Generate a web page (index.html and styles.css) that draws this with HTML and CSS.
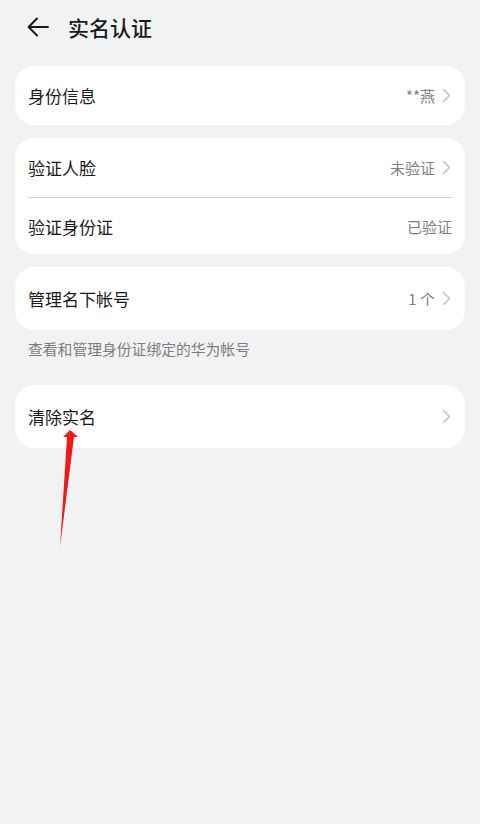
FILE: index.html
```html
<!DOCTYPE html>
<html lang="zh">
<head>
<meta charset="utf-8">
<link rel="stylesheet" href="styles.css">
</head>
<body>
<div class="page">
  <header class="topbar">
    <svg class="back" width="22" height="20" viewBox="0 0 22 20"><path d="M21 10H2M10 1.5L1.6 10l8.4 8.5" fill="none" stroke="#1a1a1a" stroke-width="2" stroke-linecap="round" stroke-linejoin="round"/></svg>
    <h1 class="title">实名认证</h1>
  </header>

  <section class="card">
    <div class="row">
      <span class="label">身份信息</span>
      <span class="value">**燕</span>
      <svg class="chev" width="9" height="15" viewBox="0 0 9 15"><path d="M1.5 1.5L7.5 7.5L1.5 13.5" fill="none" stroke="#c4c4c4" stroke-width="1.6" stroke-linecap="round" stroke-linejoin="round"/></svg>
    </div>
  </section>

  <section class="card">
    <div class="row">
      <span class="label">验证人脸</span>
      <span class="value">未验证</span>
      <svg class="chev" width="9" height="15" viewBox="0 0 9 15"><path d="M1.5 1.5L7.5 7.5L1.5 13.5" fill="none" stroke="#c4c4c4" stroke-width="1.6" stroke-linecap="round" stroke-linejoin="round"/></svg>
    </div>
    <div class="divider"></div>
    <div class="row row-short">
      <span class="label">验证身份证</span>
      <span class="value">已验证</span>
    </div>
  </section>

  <section class="card card-tall">
    <div class="row">
      <span class="label">管理名下帐号</span>
      <span class="value">1 个</span>
      <svg class="chev" width="9" height="15" viewBox="0 0 9 15"><path d="M1.5 1.5L7.5 7.5L1.5 13.5" fill="none" stroke="#c4c4c4" stroke-width="1.6" stroke-linecap="round" stroke-linejoin="round"/></svg>
    </div>
  </section>
  <p class="caption">查看和管理身份证绑定的华为帐号</p>

  <section class="card card-tall card-last">
    <div class="row">
      <span class="label">清除实名</span>
      <span class="value"></span>
      <svg class="chev" width="9" height="15" viewBox="0 0 9 15"><path d="M1.5 1.5L7.5 7.5L1.5 13.5" fill="none" stroke="#c4c4c4" stroke-width="1.6" stroke-linecap="round" stroke-linejoin="round"/></svg>
    </div>
  </section>

  <svg class="annot" width="30" height="125" viewBox="0 0 30 125"><polygon points="15,0 23,7 19,7 5,117 12,7 8,7" fill="#f01818"/></svg>
</div>
</body>
</html>
```

FILE: styles.css
```css
* { box-sizing: border-box; }
html, body { margin: 0; padding: 0; }
body {
  background: #f1f2f4;
  font-family: "Noto Sans CJK SC", "Noto Sans", sans-serif;
  color: #1a1a1a;
  width: 480px;
  height: 824px;
  overflow: hidden;
}
.page {
  position: relative;
  padding: 0 15px;
}
.topbar {
  height: 56px;
  display: flex;
  align-items: center;
  padding-left: 12px;
  gap: 19px;
  padding-bottom: 2px;
}
.back { display: block; }
.title {
  margin: 0;
  font-size: 21px;
  font-weight: 500;
  line-height: 1;
  letter-spacing: 0;
}
.card {
  background: #ffffff;
  border-radius: 20px;
  margin-top: 10px;
  padding: 0 13px;
}
.card + .card { margin-top: 13px; }
.row {
  height: 59px;
  display: flex;
  align-items: center;
}
.row-short { height: 56px; }
.card-tall .row { height: 63px; }
.label {
  font-size: 17px;
  flex: 1;
  line-height: 1;
}
.value {
  font-size: 15px;
  color: #808080;
  line-height: 1;
}
.chev {
  display: block;
  margin-left: 7px;
  margin-right: 1px;
}
.divider {
  height: 1px;
  background: #d6d6d6;
  margin-right: -1px;
}
.caption {
  margin: 9px 0 0 13px;
  font-size: 14.8px;
  color: #7c7c7c;
  line-height: 20px;
}
.card-last { margin-top: 26px; }
.annot {
  position: absolute;
  left: 55px;
  top: 430px;
}
```
